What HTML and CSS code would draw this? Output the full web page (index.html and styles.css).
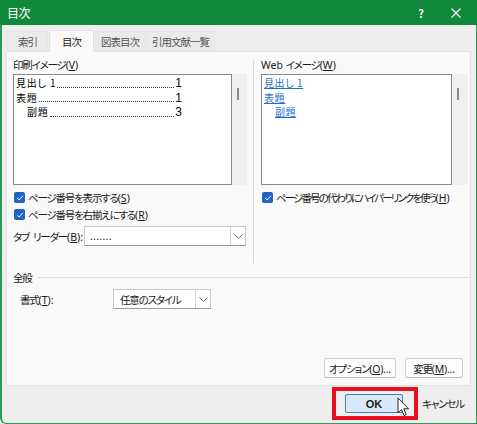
FILE: index.html
```html
<!DOCTYPE html>
<html lang="ja">
<head>
<meta charset="utf-8">
<link rel="stylesheet" href="styles.css">
</head>
<body>
<div class="window">
  <div class="titlebar">
    <span class="title">目次</span>
    <span class="tb-help">?</span>
    <svg class="tb-close" width="10" height="10" viewBox="0 0 10 10"><path d="M0.5 0.5 L9.5 9.5 M9.5 0.5 L0.5 9.5" stroke="#fff" stroke-width="1.1" fill="none"/></svg>
  </div>
  <div class="tabs">
    <div class="tab first">索引</div>
    <div class="tab active">目次</div>
    <div class="tab">図表目次</div>
    <div class="tab">引用文献一覧</div>
  </div>
  <div class="panel">
    <div class="columns">
      <div class="col left">
        <div class="label">印刷イメージ<span class="l">(<u>V</u>)</span></div>
        <div class="preview-wrap">
          <div class="preview print">
            <div class="pline"><span class="pt">見出し 1</span><span class="dots"></span><span class="pn">1</span></div>
            <div class="pline"><span class="pt">表題</span><span class="dots"></span><span class="pn">1</span></div>
            <div class="pline indent"><span class="pt">副題</span><span class="dots"></span><span class="pn">3</span></div>
          </div>
          <div class="scroll"><div class="thumb"></div></div>
        </div>
        <label class="check"><span class="cb"><svg width="8" height="8" viewBox="0 0 8 8"><path d="M1.2 4.2 L3.2 6 L6.8 1.8" stroke="#fff" stroke-width="1" fill="none"/></svg></span>ページ番号を表示する<span class="l">(<u>S</u>)</span></label>
        <label class="check"><span class="cb"><svg width="8" height="8" viewBox="0 0 8 8"><path d="M1.2 4.2 L3.2 6 L6.8 1.8" stroke="#fff" stroke-width="1" fill="none"/></svg></span>ページ番号を右揃えにする<span class="l">(<u>R</u>)</span></label>
        <div class="field-row leader-row">
          <span class="flabel">タブ<span class="sp"></span>リーダー<span class="l">(<u>B</u>):</span></span>
          <div class="combo leader"><span class="cval l">.......</span><span class="carrow"><svg width="9" height="5" viewBox="0 0 9 5"><path d="M0.5 0.5 L4.5 4.5 L8.5 0.5" stroke="#666" stroke-width="1" fill="none"/></svg></span></div>
        </div>
      </div>
      <div class="divider"></div>
      <div class="col right">
        <div class="label"><span class="l">Web </span>イメージ<span class="l">(<u>W</u>)</span></div>
        <div class="preview-wrap">
          <div class="preview web">
            <div class="wline"><a>見出し 1</a></div>
            <div class="wline"><a>表題</a></div>
            <div class="wline indent"><a>副題</a></div>
          </div>
          <div class="scroll"><div class="thumb"></div></div>
        </div>
        <label class="check long"><span class="cb"><svg width="8" height="8" viewBox="0 0 8 8"><path d="M1.2 4.2 L3.2 6 L6.8 1.8" stroke="#fff" stroke-width="1" fill="none"/></svg></span>ページ番号の代わりにハイパーリンクを使う<span class="l">(<u>H</u>)</span></label>
      </div>
    </div>
    <div class="group">
      <span class="gtitle">全般</span><span class="gline"></span>
    </div>
    <div class="field-row format">
      <span class="flabel">書式<span class="l">(<u>T</u>):</span></span>
      <div class="combo style"><span class="cval">任意のスタイル</span><span class="carrow"><svg width="9" height="5" viewBox="0 0 9 5"><path d="M0.5 0.5 L4.5 4.5 L8.5 0.5" stroke="#666" stroke-width="1" fill="none"/></svg></span></div>
    </div>
    <div class="panel-buttons">
      <button class="btn opt">オプション<span class="l">(<u>O</u>)...</span></button>
      <button class="btn mod">変更<span class="l">(<u>M</u>)...</span></button>
    </div>
  </div>
  <div class="footer">
    <div class="ok-wrap">
      <button class="btn ok">OK</button>
      <svg class="cursor" width="13" height="20" viewBox="0 0 13 20"><path d="M1 1 L1 16 L4.5 12.5 L7 18.5 L9.2 17.6 L6.8 11.8 L11.5 11.8 Z" fill="#fff" stroke="#222" stroke-width="1" stroke-linejoin="round"/></svg>
    </div>
    <button class="btn cancel">キャンセル</button>
  </div>
</div>
</body>
</html>
```
FILE: styles.css
```css
* { box-sizing: border-box; }
html, body { margin: 0; padding: 0; }
body {
  width: 477px;
  height: 424px;
  overflow: hidden;
  font-family: "Noto Sans CJK JP", "Noto Sans", sans-serif;
  font-size: 10.5px;
  letter-spacing: -1.2px;
  font-feature-settings: "palt" 1;
  color: #1a1a1a;
  background: #fff;
  white-space: nowrap;
}
.l { letter-spacing: 0; font-family: "Noto Sans", "Noto Sans CJK JP", sans-serif; }
.sp { display: inline-block; width: 4px; }
u { text-decoration: underline; text-underline-offset: 1px; }
.window {
  width: 477px;
  height: 424px;
  display: flex;
  flex-direction: column;
  background: #eeeeee;
  border: 1px solid #2f9a55;
  border-left-width: 2px;
  border-top: none;
  border-bottom-left-radius: 6px;
}
.titlebar {
  height: 25px;
  background: #11893d;
  color: #fff;
  display: flex;
  align-items: center;
  padding-left: 7px;
  margin: 0 -1px 0 -2px;
  flex: none;
}
.title { font-size: 12px; letter-spacing: -0.5px; flex: 1; }
.tb-help { font-size: 11px; font-weight: bold; margin-right: 27px; letter-spacing: 0; }
.tb-close { margin-right: 16px; }
.tabs {
  display: flex;
  padding-left: 5px;
  margin-top: 4px;
  height: 22px;
  align-items: flex-end;
  flex: none;
  letter-spacing: -1px;
}
.tab {
  height: 20px;
  line-height: 19px;
  padding: 0 5px;
  color: #555;
  background: #eaeaea;
  border: 1px solid #e4e4e4;
  border-bottom: none;
  margin-right: 1px;
}
.tab.first { padding: 0 10px; width: 41px; }
.tab.active {
  height: 22px;
  line-height: 21px;
  background: #f9f9f9;
  color: #1a1a1a;
  padding: 0 12px;
  border-color: #e2e2e2;
  position: relative;
  top: 1px;
}
.panel {
  margin: 0 5px 0 4px;
  height: 335px;
  background: #f9f9f9;
  border: 1px solid #e2e2e2;
  padding: 5px 0 0 6px;
  display: flex;
  flex-direction: column;
  flex: none;
}
.columns { display: flex; height: 203px; }
.col.left { width: 234px; }
.divider { width: 1px; background: #d8d8d8; margin: 3px 7px 0 6px; height: 203px; }
.col.right { width: 206px; }
.label { height: 17px; line-height: 16px; }
.preview-wrap { display: flex; height: 111px; }
.preview {
  flex: 1;
  background: #fff;
  border: 1px solid #8a8a8a;
  padding: 1px 2px;
  letter-spacing: 0;
}
.scroll {
  width: 15px;
  background: #f0f0f0;
  position: relative;
}
.thumb {
  position: absolute;
  left: 5px;
  top: 14px;
  width: 2px;
  height: 12px;
  background: #8a8a8a;
}
.print { font-size: 10px; color: #000; letter-spacing: 0.8px; }
.pline { display: flex; height: 14.5px; line-height: 14.5px; width: 166px; align-items: baseline; }
.pline.indent { padding-left: 11px; }
.dots { flex: 1; border-bottom: 1px dotted #333; margin: 0 1px 3px 1px; height: 1px; align-self: flex-end; }
.pn { font-family: "Liberation Sans", sans-serif; font-size: 12px; letter-spacing: 0; }
.web { font-size: 10px; letter-spacing: 0.6px; }
.wline { height: 14.5px; line-height: 14.5px; }
.wline a { color: #1c6fc8; text-decoration: underline; }
.wline.indent { padding-left: 11px; }
.check {
  display: flex;
  align-items: center;
  height: 17px;
  color: #1a1a1a;
}
.check.long { letter-spacing: -1.9px; }
.preview-wrap + .check { margin-top: 4px; }
.cb {
  width: 11px;
  height: 11px;
  background: #1f63c6;
  border-radius: 2px;
  margin: 0 3px 0 1px;
  display: flex;
  align-items: center;
  justify-content: center;
  flex: none;
}
.field-row { display: flex; align-items: center; }
.leader-row { margin-top: 3px; }
.flabel { width: 71px; flex: none; }
.combo {
  display: flex;
  align-items: center;
  height: 20px;
  background: #fff;
  border: 1px solid #c8c8c8;
  border-bottom-color: #9a9a9a;
}
.combo.leader { width: 162px; }
.cval { flex: 1; padding-left: 4px; }
.cval.l { letter-spacing: 0.3px; padding-left: 5px; }
.carrow {
  width: 15px;
  height: 100%;
  border-left: 1px solid #d4d4d4;
  display: flex;
  align-items: center;
  justify-content: center;
}
.group { display: flex; align-items: center; margin-top: 10px; height: 14px; }
.gtitle { margin-right: 5px; }
.gline { flex: 1; height: 1px; background: #dcdcdc; }
.field-row.format { margin-top: 5px; padding-left: 7px; }
.format .flabel { width: 93px; }
.combo.style { width: 98px; }
.combo.style .cval { padding-left: 6px; }
.panel-buttons {
  display: flex;
  justify-content: flex-end;
  gap: 9px;
  margin-top: auto;
  margin-bottom: 7px;
  padding-right: 7px;
}
.btn {
  font-family: inherit;
  font-size: 10.5px;
  letter-spacing: -1.2px;
  font-feature-settings: "palt" 1;
  color: #1a1a1a;
  height: 20px;
  padding: 0;
  background: #fdfdfd;
  border: 1px solid #d0d0d0;
  border-bottom-color: #b8b8b8;
  border-radius: 3px;
  white-space: nowrap;
}
.btn .l { letter-spacing: -0.2px; }
.btn.opt { width: 72px; }
.btn.mod { width: 58px; }
.footer {
  flex: 1;
  display: flex;
  justify-content: flex-end;
  align-items: flex-start;
  padding-right: 8px;
  padding-top: 1px;
}
.ok-wrap {
  position: relative;
  border: 4px solid #e5101d;
  padding: 3px 11px 3px 9px;
}
.btn.ok {
  width: 58px;
  height: 19px;
  background: #d9e9f8;
  border: 1px solid #3c7fc9;
  border-radius: 2px;
  font-family: "Liberation Sans", sans-serif;
  font-size: 11px;
  letter-spacing: 0;
  font-weight: bold;
  color: #222;
}
.cursor { position: absolute; left: 61px; top: 6px; }
.btn.cancel {
  width: 50px;
  height: 33px;
  border: none;
  background: transparent;
}
```
